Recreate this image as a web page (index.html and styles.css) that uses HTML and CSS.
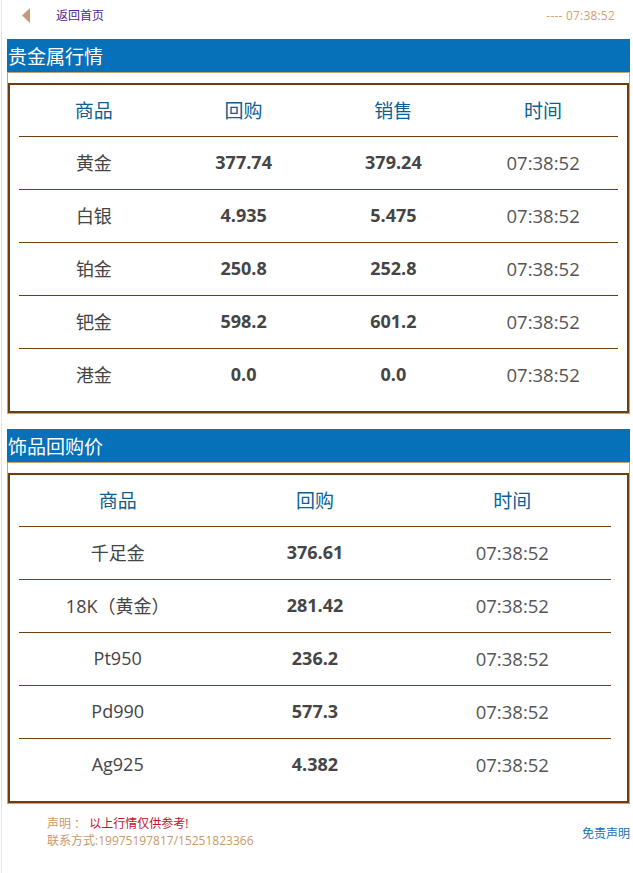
FILE: index.html
```html
<!DOCTYPE html>
<html lang="zh-CN">
<head>
<meta charset="utf-8">
<title>贵金属行情</title>
<link rel="stylesheet" href="styles.css">
</head>
<body>
<div class="page">
  <div class="topbar">
    <a class="back" href="#">
      <svg class="back-arrow" width="8" height="15" viewBox="0 0 8 15"><polygon points="8,0 8,15 0,7.5" fill="#c59a72"/></svg>
      <span class="back-text">返回首页</span>
    </a>
    <span class="clock">----&nbsp;07:38:52</span>
  </div>

  <section class="panel">
    <h2 class="panel-title">贵金属行情</h2>
    <div class="panel-body">
      <div class="quote-table cols-4">
        <div class="row head"><span>商品</span><span>回购</span><span>销售</span><span>时间</span></div>
        <div class="row"><span>黄金</span><b>377.74</b><b>379.24</b><span class="t">07:38:52</span></div>
        <div class="row"><span>白银</span><b>4.935</b><b>5.475</b><span class="t">07:38:52</span></div>
        <div class="row"><span>铂金</span><b>250.8</b><b>252.8</b><span class="t">07:38:52</span></div>
        <div class="row"><span>钯金</span><b>598.2</b><b>601.2</b><span class="t">07:38:52</span></div>
        <div class="row"><span>港金</span><b>0.0</b><b>0.0</b><span class="t">07:38:52</span></div>
      </div>
    </div>
  </section>

  <section class="panel second">
    <h2 class="panel-title">饰品回购价</h2>
    <div class="panel-body">
      <div class="quote-table cols-3">
        <div class="row head"><span>商品</span><span>回购</span><span>时间</span></div>
        <div class="row"><span>千足金</span><b>376.61</b><span class="t">07:38:52</span></div>
        <div class="row"><span>18K（黄金）</span><b>281.42</b><span class="t">07:38:52</span></div>
        <div class="row"><span>Pt950</span><b>236.2</b><span class="t">07:38:52</span></div>
        <div class="row"><span>Pd990</span><b>577.3</b><span class="t">07:38:52</span></div>
        <div class="row"><span>Ag925</span><b>4.382</b><span class="t">07:38:52</span></div>
      </div>
    </div>
  </section>

  <footer class="footer">
    <div class="notes">
      <div><span class="tan">声明 ： </span><span class="red">以上行情仅供参考!</span></div>
      <div class="tan">联系方式:19975197817/15251823366</div>
    </div>
    <a class="disclaimer" href="#">免责声明</a>
  </footer>
</div>
</body>
</html>
```

FILE: styles.css
```css
html, body {
  margin: 0;
  padding: 0;
  background: #fff;
}

body {
  font-family: "Open Sans", "Noto Sans CJK SC", sans-serif;
}

.page {
  margin-left: 1px;
  border-left: 1px solid #e4e4e4;
  min-height: 873px;
  box-sizing: border-box;
}

.topbar {
  height: 39px;
  display: flex;
  align-items: flex-start;
  justify-content: space-between;
  padding: 7px 18px 0 20px;
  box-sizing: border-box;
  font-size: 12px;
  line-height: 16px;
}

.back {
  display: flex;
  align-items: center;
  gap: 26px;
  text-decoration: none;
}

.back-arrow {
  display: block;
}

.back-text {
  color: #551a8b;
  font-family: "Noto Sans CJK SC", sans-serif;
}

.clock {
  color: #d2a06e;
  margin-top: 1px;
  letter-spacing: 0.2px;
}

.panel {
  margin: 0 3px 0 5px;
}

.panel.second {
  margin-top: 15px;
}

.panel-title {
  margin: 0;
  height: 33px;
  background: #0670b8;
  color: #fff;
  font-family: "Noto Sans CJK SC", sans-serif;
  font-weight: normal;
  font-size: 19px;
  line-height: 33px;
  padding-left: 1px;
  border-bottom: 1px solid #c9a273;
}

.panel-body {
  border: 1px solid #c9a273;
  border-top: none;
  padding-top: 10px;
}

.quote-table {
  border: 2px solid #6e3f0e;
  padding: 0 9px 10px 9px;
}

.quote-table.cols-3 {
  padding-right: 16px;
}

.row {
  display: grid;
  height: 50px;
  box-sizing: content-box;
  padding-bottom: 2px;
  align-items: center;
  text-align: center;
  border-top: 1px solid #6e3f0e;
  font-size: 18px;
  color: #444;
}

.cols-4 .row {
  grid-template-columns: repeat(4, 1fr);
}

.cols-3 .row {
  grid-template-columns: repeat(3, 1fr);
}

.row.head {
  height: 49px;
  border-top: none;
  font-size: 19px;
  color: #0d5e93;
  font-family: "Noto Sans CJK SC", sans-serif;
}

.row b {
  font-weight: bold;
  color: #454545;
}

.row .t {
  color: #555;
  font-size: 18.5px;
}

.footer {
  display: flex;
  justify-content: space-between;
  align-items: center;
  padding: 11px 3px 0 45px;
  font-size: 12px;
  line-height: 17px;
}

.tan {
  color: #c8986a;
}

.red {
  color: #c8102e;
}

.disclaimer {
  color: #1a6cb5;
  text-decoration: none;
  margin-top: 2px;
}
```
